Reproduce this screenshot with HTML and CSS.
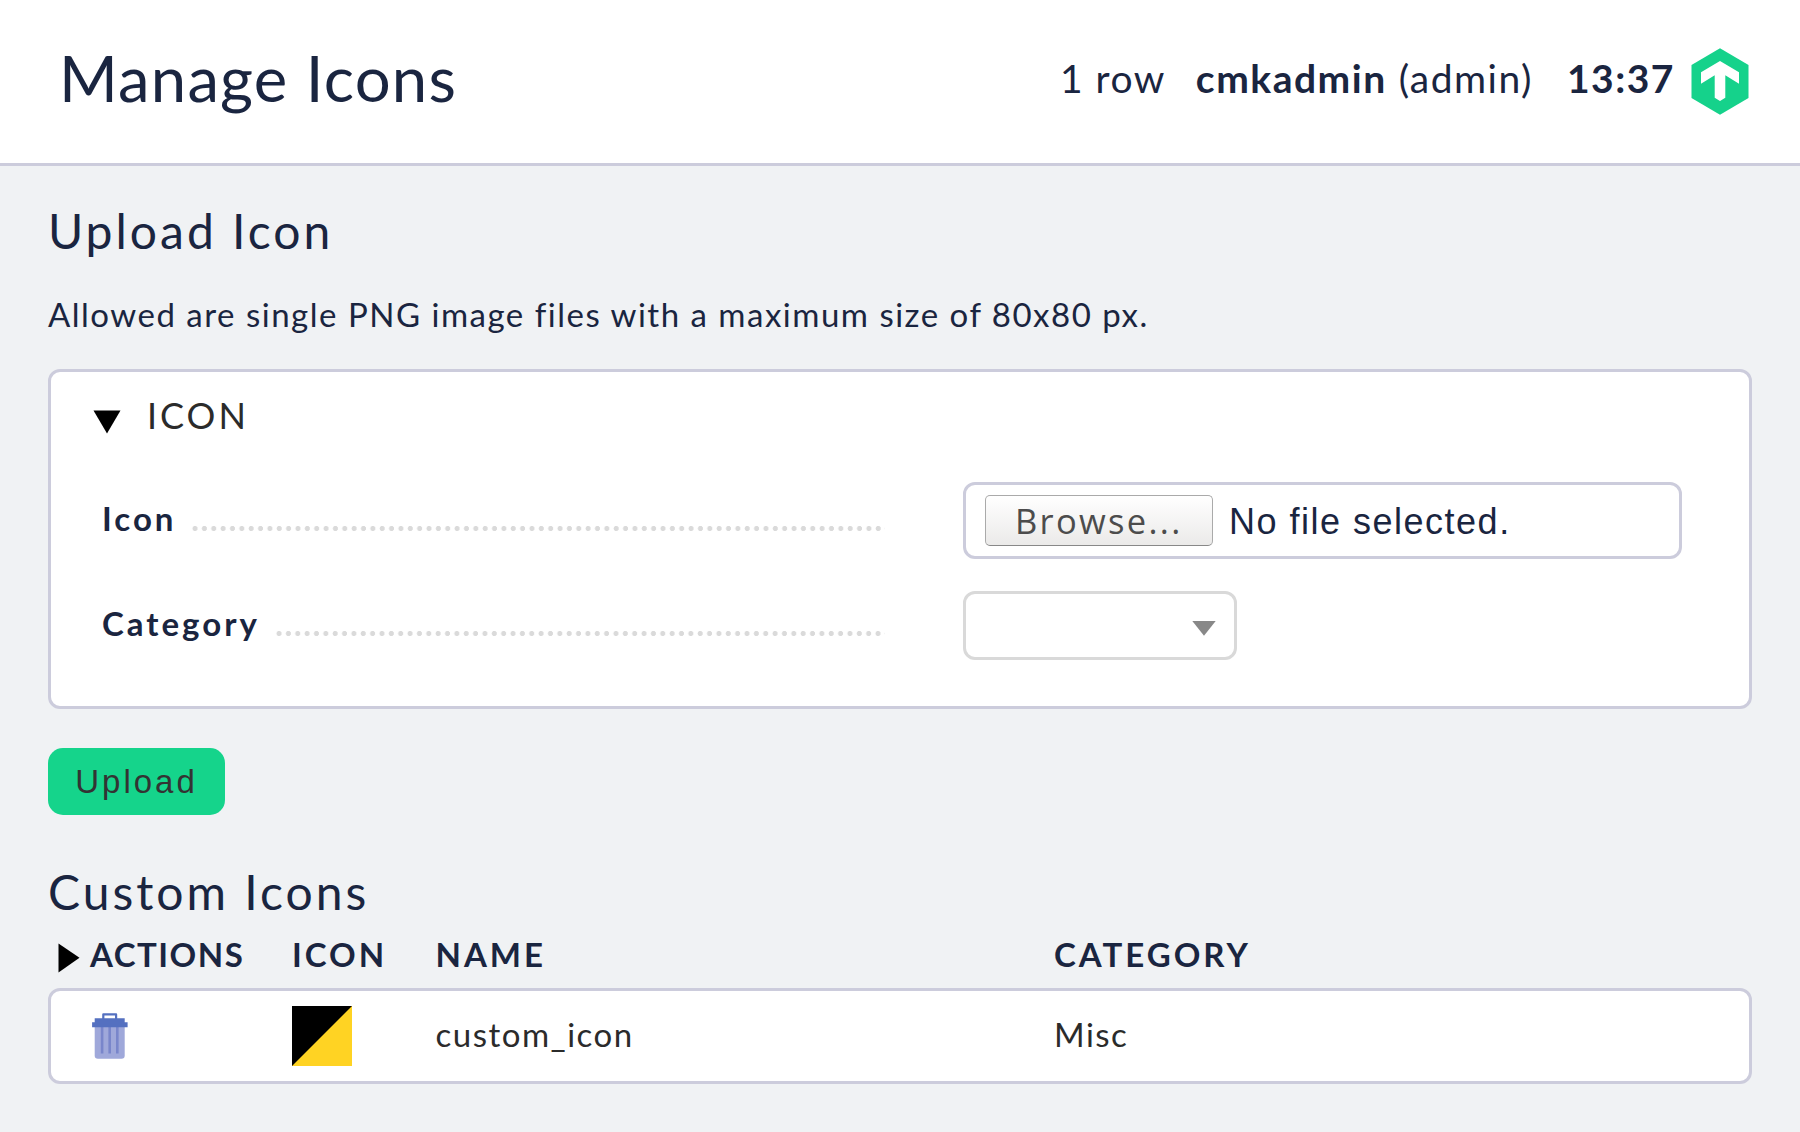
FILE: index.html
```html
<!DOCTYPE html>
<html lang="en">
<head>
<meta charset="utf-8">
<title>Manage Icons</title>
<link rel="stylesheet" href="styles.css">
</head>
<body>
<header class="top">
  <h1 class="title">Manage Icons</h1>
  <div class="status">
    <span class="rows">1 row</span>
    <span class="user"><b>cmkadmin</b><span class="role">(admin)</span></span>
    <b class="time">13:37</b>
    <svg class="logo" width="58" height="67" viewBox="0 0 58 67">
      <path fill="#15d28b" d="M29 .3 57.5 17V50L29 66.7.5 50V17z"/>
      <path fill="#fff" d="M29 13 48 24.2v11.5L34.3 27.3v22.4L29 52.9l-5.3-3.2V27.3L10 35.7V24.2z"/>
    </svg>
  </div>
</header>
<main class="content">
  <h2 class="heading">Upload Icon</h2>
  <p class="hint">Allowed are single PNG image files with a maximum size of 80x80 px.</p>
  <form class="form">
    <section class="panel">
      <div class="panel-title">
        <svg class="fold" width="28" height="24" viewBox="0 0 28 24"><path fill="#000" d="M.5 .5h27L14 23.5z"/></svg>
        <span>ICON</span>
      </div>
      <div class="field">
        <div class="label"><b>Icon</b><span class="dots"></span></div>
        <div class="file"><span class="browse">Browse...</span><span class="filename">No file selected.</span></div>
      </div>
      <div class="field field-category">
        <div class="label"><b>Category</b><span class="dots"></span></div>
        <div class="select"><svg width="24" height="15" viewBox="0 0 24 15"><path fill="#888" d="M.3 0h23.4L12 14.8z"/></svg></div>
      </div>
    </section>
    <button class="upload" type="button">Upload</button>
  </form>
  <h2 class="heading heading-custom">Custom Icons</h2>
  <div class="grid thead">
    <div class="th-actions">
      <svg width="22" height="30" viewBox="0 0 22 30"><path fill="#000" d="M.5 .5 21.5 14.8.5 29.5z"/></svg>
      <span>ACTIONS</span>
    </div>
    <span>ICON</span>
    <span>NAME</span>
    <span>CATEGORY</span>
  </div>
  <div class="grid trow">
    <div class="td-actions">
      <svg width="36" height="46" viewBox="0 0 36 46">
        <path fill="#9fa8da" d="M2.7 13h30v29.5a3.2 3.2 0 0 1-3.2 3.2H5.9a3.2 3.2 0 0 1-3.2-3.2z"/>
        <path fill="#7986cb" d="M8.8 13h2.6v27.5H8.8zM16.4 13h2.6v27.5h-2.6zM24 13h2.6v27.5H24z"/>
        <path fill="none" stroke="#5470c0" stroke-width="2.2" stroke-linejoin="round" d="M11.3 6V1.4h12.8V6"/>
        <path fill="#5470c0" d="M2.7 5.2h30v4.1h2.9v4.9H.1V9.3h2.6z"/>
      </svg>
    </div>
    <svg width="60" height="60" viewBox="0 0 60 60"><path fill="#ffd323" d="M0 0h60v60H0z"/><path fill="#000" d="M0 0h60L0 60z"/></svg>
    <span>custom_icon</span>
    <span>Misc</span>
  </div>
</main>
</body>
</html>
```
FILE: styles.css
```css
* { box-sizing: border-box; }
body {
  margin: 0;
  min-height: 1132px;
  background: #f0f2f4;
  color: #1a2540;
  font: 33px/40px Lato, sans-serif;
  letter-spacing: 1.5px;
}
svg { display: block; flex: none; }
h1, h2, p { margin: 0; font-weight: 400; }

.top {
  display: flex;
  justify-content: space-between;
  align-items: center;
  height: 166px;
  padding: 0 51px 7px 59px;
  background: #fff;
  border-bottom: 3px solid #ccccdc;
}
.title { font-size: 63.4px; line-height: 76px; letter-spacing: 1.2px; }
.status { display: flex; align-items: center; font-size: 39px; line-height: 48px; }
.user { display: flex; margin-left: 30px; }
.role { margin-left: 12px; }
.time { margin-left: 34px; }
.logo { margin: 7px 0 0 16px; }

.content { padding: 36px 48px 0; }
.heading { font-size: 48px; line-height: 58px; letter-spacing: 3px; }
.heading-custom { margin-top: 48px; }
.hint { margin-top: 34px; }

.panel {
  height: 340px;
  margin-top: 35px;
  padding: 21px 67px 0 42px;
  background: #fff;
  border: 3px solid #ccccdc;
  border-radius: 12px;
}
.panel-title {
  display: flex;
  gap: 26px;
  line-height: 44px;
  font-size: 36px;
  letter-spacing: 3px;
  color: #2b2b2b;
}
.fold { margin-top: 17px; }
.field {
  display: flex;
  align-items: flex-start;
  justify-content: space-between;
  margin-top: 45px;
  padding-left: 9px;
}
.label { display: flex; flex: none; width: 783px; margin-top: 16px; }
.label b { letter-spacing: 3px; }
.dots {
  flex: 1;
  height: 5px;
  margin: 28px 0 0 14px;
  background: radial-gradient(circle at 5px 2.5px, #dadada 2.2px, transparent 2.9px) 0 0 / 9.36px 5px repeat-x;
}
.file {
  display: flex;
  align-items: center;
  width: 719px;
  height: 77px;
  padding-left: 19px;
  border: 3px solid #ccccdc;
  border-radius: 12px;
}
.browse {
  width: 228px;
  height: 51px;
  padding-left: 29px;
  border: 1px solid #aaa;
  border-bottom-color: #888;
  border-radius: 5px;
  background: linear-gradient(#fff, #ebeae9);
  color: #4c4c4c;
  font: 500 34.5px/49px "Open Sans", sans-serif;
  letter-spacing: 2.3px;
}
.filename { margin: 2px 0 0 16px; font: 36px/44px "Liberation Sans", sans-serif; letter-spacing: 1.5px; }
.field-category { justify-content: flex-start; margin-top: 32px; }
.field-category .label { margin-top: 12px; }
.select {
  display: flex;
  justify-content: flex-end;
  width: 274px;
  height: 69px;
  margin-left: 78px;
  padding: 27px 18px 0 0;
  border: 3px solid #d9d9d9;
  border-radius: 12px;
}
.upload {
  display: block;
  width: 177px;
  height: 67px;
  margin-top: 39px;
  padding: 0;
  border: 0;
  border-radius: 15px;
  background: #15d48b;
  color: #333;
  font: 33px/40px "Liberation Sans", sans-serif;
  letter-spacing: 3px;
}

.grid { display: grid; grid-template-columns: 244px 143.5px 618.5px 1fr; }
.thead { margin-top: 13px; font-weight: 700; letter-spacing: 3px; }
.th-actions { display: flex; gap: 10px; padding-left: 10px; letter-spacing: 1.5px; }
.th-actions svg { margin-top: 9px; }
.trow {
  height: 96px;
  margin-top: 14px;
  padding-top: 15px;
  grid-template-columns: 241px 143.5px 618.5px 1fr;
  background: #fff;
  border: 3px solid #ccccdc;
  border-radius: 12px;
  color: #2b2b2b;
}
.trow span { margin-top: 8px; }
.td-actions { padding: 7px 0 0 41px; }
```
